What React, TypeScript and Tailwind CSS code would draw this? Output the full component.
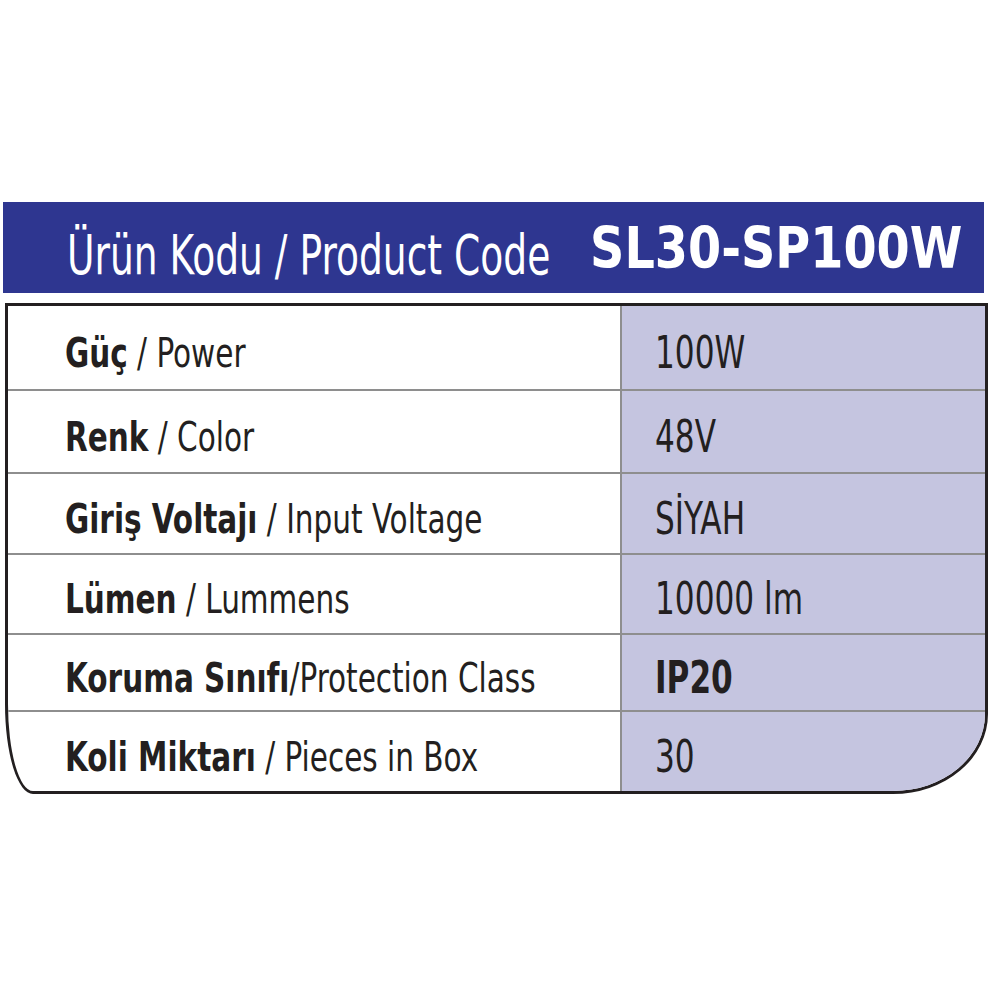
const rows = [
  { tr: "Güç", en: "Power", value: "100W", h: "h-[85px]" },
  { tr: "Renk", en: "Color", value: "48V", h: "h-[83px]" },
  { tr: "Giriş Voltajı", en: "Input Voltage", value: "SİYAH", h: "h-[81px]" },
  { tr: "Lümen", en: "Lummens", value: "10000 lm", h: "h-[80px]" },
  { tr: "Koruma Sınıfı", en: "Protection Class", value: "IP20", h: "h-[77px]", tight: true, boldValue: true },
  { tr: "Koli Miktarı", en: "Pieces in Box", value: "30", h: "h-[79px]" },
];

const font = "font-['DejaVu_Sans_Condensed','DejaVu_Sans',sans-serif] [font-stretch:condensed]";

export default function App() {
  return (
    <div className="w-[1000px] h-[1000px] bg-white pt-[202px]">
      <div className="ml-[3px] w-[981px] h-[91px] bg-[#2e3690] flex items-center pl-[64px] pr-[22px] text-white">
        <div className="w-[490px] shrink-0 flex items-center pt-[16px]">
          <div className={`${font} text-[55px] whitespace-nowrap shrink-0 origin-left scale-x-[0.76]`}>
            <span className="font-normal">Ürün Kodu</span>
            <span className="font-light"> / Product Code</span>
          </div>
        </div>
        <div className="flex-1 flex justify-end items-center pt-[2px]">
          <div className={`${font} text-[57px] font-bold whitespace-nowrap shrink-0 origin-right scale-x-[0.93]`}>
            SL30-SP100W
          </div>
        </div>
      </div>

      <div className="ml-[5px] mt-[10px] w-[983px] border-[3px] border-[#231f20] rounded-bl-[28px_90px] rounded-br-[95px_80px] overflow-hidden">
        {rows.map((r, i) => (
          <div
            key={r.tr}
            className={`flex ${r.h} ${i < rows.length - 1 ? "border-b-2 border-[#8e8e8e]" : ""}`}
          >
            <div className="w-[612px] flex items-center pl-[57px] pt-[10px] text-[#231f20]">
              <div className={`${font} text-[40px] whitespace-nowrap inline-block origin-left scale-x-[0.82]`}>
                <span className="font-bold">{r.tr}</span>
                <span className="font-light whitespace-pre">{r.tight ? "/" : " / "}{r.en}</span>
              </div>
            </div>
            <div className="flex-1 flex items-center border-l-2 border-[#8e8e8e] bg-[#c5c5e0] pl-[33px] pt-[10px] text-[#231f20]">
              <div className={`${font} text-[45px] whitespace-nowrap inline-block origin-left scale-x-[0.77] ${r.boldValue ? "font-bold" : "font-normal"}`}>
                {r.value}
              </div>
            </div>
          </div>
        ))}
      </div>
    </div>
  );
}
